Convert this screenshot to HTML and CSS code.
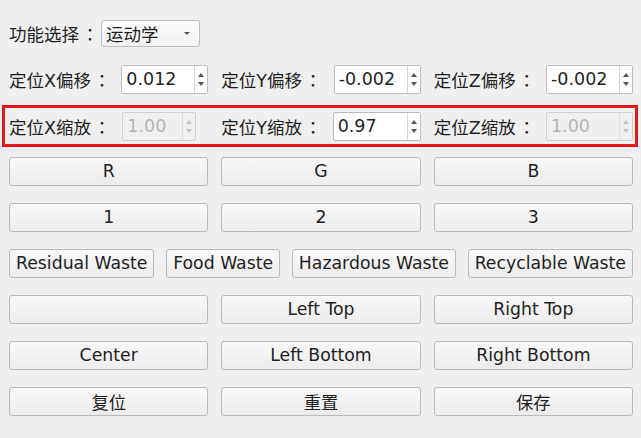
FILE: index.html
```html
<!DOCTYPE html>
<html>
<head>
<meta charset="utf-8">
<link rel="stylesheet" href="styles.css">
</head>
<body>
<div class="panel">
  <div class="row">
    <span class="label">功能选择<span class="colon">：</span></span>
    <div class="combo"><span>运动学</span><span class="caret"></span></div>
  </div>

  <div class="row grid3">
    <div class="field"><span class="label">定位X偏移<span class="colon">：</span></span><div class="spin"><span class="val">0.012</span><span class="arrows"><i class="up"></i><i class="down"></i></span></div></div>
    <div class="field"><span class="label">定位Y偏移<span class="colon">：</span></span><div class="spin"><span class="val">-0.002</span><span class="arrows"><i class="up"></i><i class="down"></i></span></div></div>
    <div class="field"><span class="label">定位Z偏移<span class="colon">：</span></span><div class="spin"><span class="val">-0.002</span><span class="arrows"><i class="up"></i><i class="down"></i></span></div></div>
  </div>

  <div class="row highlight">
    <div class="grid3 inner">
      <div class="field"><span class="label">定位X缩放<span class="colon">：</span></span><div class="spin disabled short"><span class="val">1.00</span><span class="arrows"><i class="up"></i><i class="down"></i></span></div></div>
      <div class="field"><span class="label">定位Y缩放<span class="colon">：</span></span><div class="spin wide"><span class="val">0.97</span><span class="arrows"><i class="up"></i><i class="down"></i></span></div></div>
      <div class="field"><span class="label">定位Z缩放<span class="colon">：</span></span><div class="spin disabled"><span class="val">1.00</span><span class="arrows"><i class="up"></i><i class="down"></i></span></div></div>
    </div>
  </div>

  <div class="row grid3">
    <button class="btn">R</button><button class="btn">G</button><button class="btn">B</button>
  </div>
  <div class="row grid3">
    <button class="btn">1</button><button class="btn">2</button><button class="btn">3</button>
  </div>
  <div class="row spread">
    <button class="btn">Residual Waste</button><button class="btn">Food Waste</button><button class="btn">Hazardous Waste</button><button class="btn">Recyclable Waste</button>
  </div>
  <div class="row grid3">
    <button class="btn"></button><button class="btn">Left Top</button><button class="btn">Right Top</button>
  </div>
  <div class="row grid3">
    <button class="btn">Center</button><button class="btn">Left Bottom</button><button class="btn">Right Bottom</button>
  </div>
  <div class="row grid3">
    <button class="btn">复位</button><button class="btn">重置</button><button class="btn">保存</button>
  </div>
</div>
</body>
</html>
```

FILE: styles.css
```css
html, body {
  margin: 0;
  padding: 0;
  background: #efefef;
  width: 641px;
  height: 438px;
  overflow: hidden;
}
body {
  font-family: "DejaVu Sans", "Noto Sans CJK SC", sans-serif;
  font-size: 17px;
  color: #1f1f1f;
}
.panel {
  padding: 10px 8px 0 9px;
  display: flex;
  flex-direction: column;
}
.row {
  height: 46px;
  display: flex;
  align-items: center;
  box-sizing: border-box;
}
.grid3 {
  display: grid;
  grid-template-columns: repeat(3, 1fr);
  column-gap: 13px;
  align-items: center;
}
.label {
  font-family: "DejaVu Sans", "Noto Sans CJK SC", sans-serif;
  font-size: 17.5px;
  white-space: nowrap;
}
.colon {
  font-family: "Noto Sans CJK JP", sans-serif;
  display: inline-block;
  width: 22px;
  text-align: center;
}
.combo {
  margin-left: 0;
  width: 99px;
  height: 27px;
  box-sizing: border-box;
  border: 1px solid #bdbdbd;
  border-radius: 3px;
  background: linear-gradient(#fbfbfb, #f1f1f1);
  display: flex;
  align-items: center;
  justify-content: space-between;
  padding: 0 9px 0 4px;
  font-size: 17.5px;
}
.caret {
  width: 0;
  height: 0;
  border-left: 3px solid transparent;
  border-right: 3px solid transparent;
  border-top: 3px solid #555;
}
.field {
  display: flex;
  align-items: center;
}
.spin {
  margin-left: auto;
  width: 87px;
  height: 29px;
  box-sizing: border-box;
  border: 1px solid #bcbcbc;
  border-radius: 2px;
  background: #fff;
  display: flex;
  align-items: center;
}
.spin.short {
  width: 74px;
  margin-right: 12px;
}
.spin.wide {
  width: 88px;
}
.val {
  flex: 1;
  padding-left: 4px;
  font-size: 17.5px;
}
.arrows {
  width: 13px;
  height: 100%;
  box-sizing: border-box;
  border-left: 1px solid #d6d6d6;
  display: flex;
  flex-direction: column;
  align-items: center;
  justify-content: center;
  gap: 5px;
}
.arrows i {
  width: 0;
  height: 0;
  border-left: 3px solid transparent;
  border-right: 3px solid transparent;
}
.arrows .up { border-bottom: 4px solid #555; }
.arrows .down { border-top: 4px solid #555; }
.spin.disabled {
  background: #efefef;
  border-color: #cfcfcf;
}
.spin.disabled .val { color: #b4b4b4; }
.spin.disabled .arrows { border-left-color: #dcdcdc; }
.spin.disabled .arrows .up { border-bottom-color: #c2c2c2; }
.spin.disabled .arrows .down { border-top-color: #c2c2c2; }
.highlight {
  height: 42px;
  margin: 3px -5px 1px -7px;
  border: 3px solid #e0181b;
  padding: 0 2px 0 4px;
}
.highlight .inner {
  width: 100%;
}
.btn {
  height: 29px;
  box-sizing: border-box;
  border: 1px solid #b9b9b9;
  border-radius: 3px;
  background: linear-gradient(#f8f8f8, #ececec);
  font-family: "DejaVu Sans", "Noto Sans CJK SC", sans-serif;
  font-size: 17.3px;
  color: #1f1f1f;
  padding: 0 6px;
  margin: 0;
  white-space: nowrap;
}
.spread {
  justify-content: space-between;
}
```
